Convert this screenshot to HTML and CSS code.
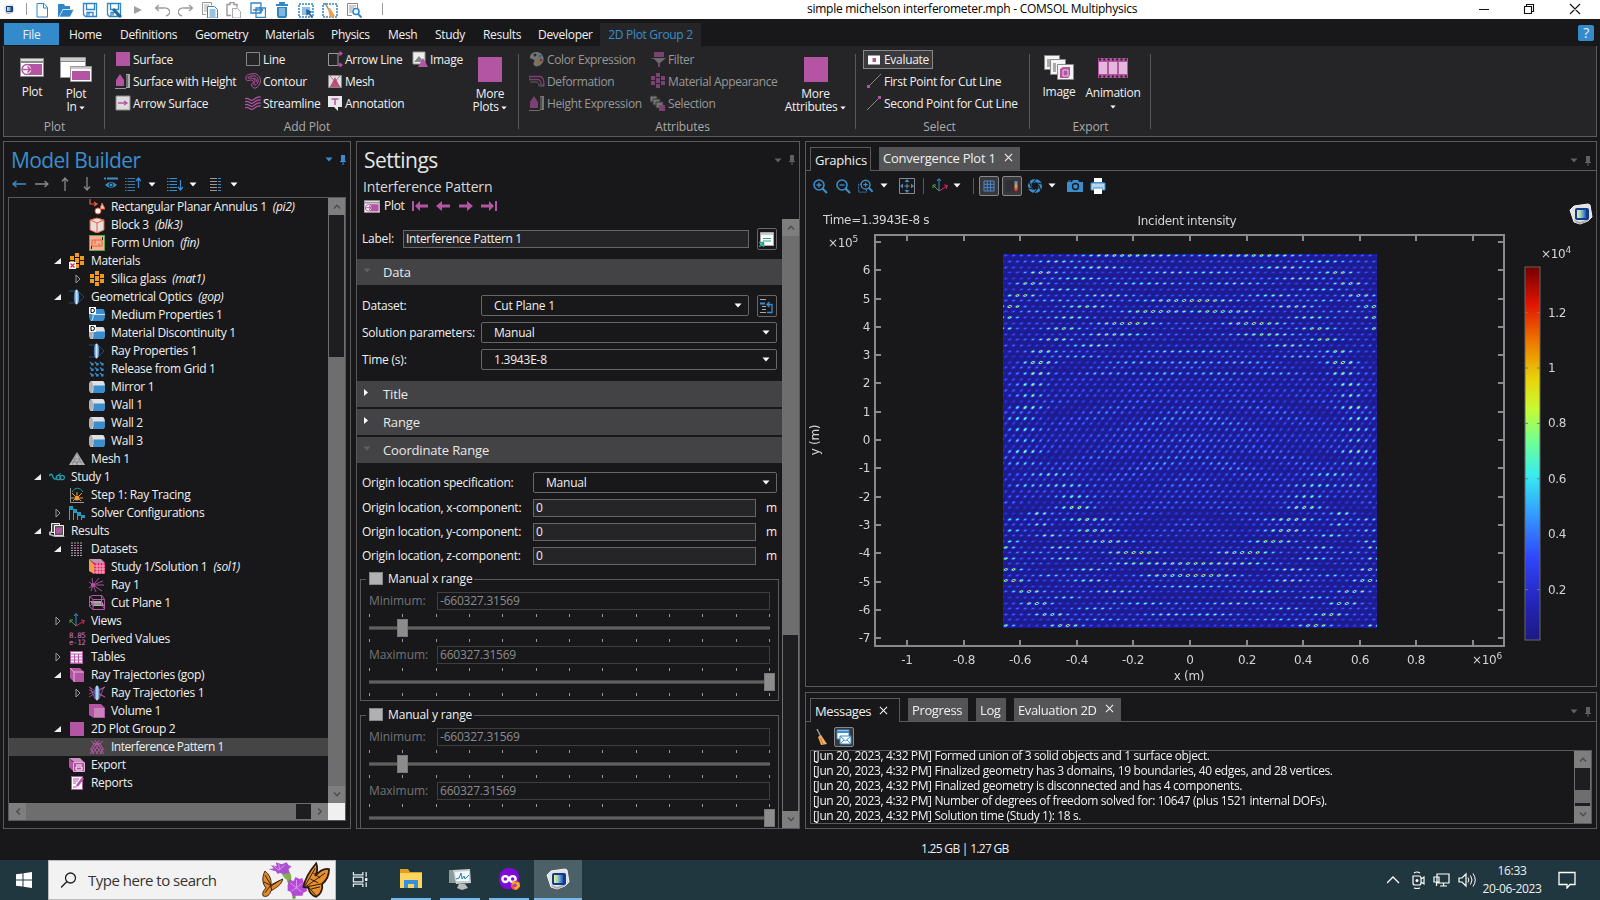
FILE: index.html
```html
<!DOCTYPE html>
<html lang="en">
<head>
<meta charset="utf-8">
<title>simple michelson interferometer.mph - COMSOL Multiphysics</title>
<link rel="stylesheet" href="styles.css">
</head>
<body>
<svg class="sprite" aria-hidden="true">
<defs>
<linearGradient id="lens"><stop offset="0" stop-color="#1d5a96"/><stop offset=".5" stop-color="#cfe6fa"/><stop offset="1" stop-color="#2e7cc0"/></linearGradient>
<linearGradient id="core"><stop offset="0" stop-color="#f0f080"/><stop offset=".4" stop-color="#9cd0c0"/><stop offset="1" stop-color="#1c58c0"/></linearGradient>
<linearGradient id="bar" x1="0" y1="1" x2="0" y2="0"><stop offset="0" stop-color="#e02040"/><stop offset=".45" stop-color="#f0a040"/><stop offset="1" stop-color="#3a8ecd"/></linearGradient>
</defs>
<symbol id="logo" viewBox="0 0 24 22"><path d="m1 7 4-4 14-2 2 1 2 12-4 4-8 3-6-2z" fill="#e2e2e2" stroke="#f4f4f4"/><path d="m5 17 6 2 9-3 2-3-3 5-8 3-5-2z" fill="#aaa"/><rect x="6" y="5" width="14" height="12" rx="2" fill="#123a8c"/><rect x="8" y="7" width="9" height="8" fill="url(#core)"/></symbol>
<symbol id="new" viewBox="0 0 16 16"><path d="M3 1.500h7l3.500 4v9.500H3zM9.500 1.500v4.500h4" fill="none" stroke="#2f86c8"/></symbol>
<symbol id="open" viewBox="0 0 16 16"><path d="M0 15V2h6l1 2h5v3H5L1 15z" fill="#2f86c8"/><path d="M5 7.500h11L12 15H1z" fill="#2f86c8" stroke="#fff" stroke-width=".6"/></symbol>
<symbol id="save" viewBox="0 0 16 16"><path d="M1.500 1.500h13v13h-11l-2-2zM4.500 1.500v6h8v-6M5 14.500v-4h6v4M7 11v2.500" fill="none" stroke="#2f86c8" stroke-width="1.300"/></symbol>
<symbol id="saveas" viewBox="0 0 16 16"><use href="#save"/><path d="m7 7 8 8" stroke="#2468a0" stroke-width="3"/></symbol>
<symbol id="play" viewBox="0 0 16 16"><path d="m4 4 8 4-8 4z" fill="#a0a0a0"/></symbol>
<symbol id="undo" viewBox="0 0 16 16"><path d="M5 3 1.500 6 5 9M2 6h7a5 4 0 0 1 3 8" fill="none" stroke="#9a9a9a" stroke-width="1.300"/></symbol>
<symbol id="copy" viewBox="0 0 16 16"><path d="M4 12.500H.5v-12h9v3" fill="none" stroke="#999"/><path d="M2 3h5M2 5h3M2 7h3M2 9h3" stroke="#aaa"/><path d="M5.500 4.500h7l3 3V16H5.500z" fill="#fff" stroke="#2f86c8"/><path d="M7.500 8h6M7.500 10h6M7.500 12h6M7.500 14h6" stroke="#2f86c8"/></symbol>
<symbol id="paste" viewBox="0 0 16 16"><path d="M5 13.500H1v-11h3v-2h4v2h3v3" fill="none" stroke="#999" stroke-width="1.400"/><path d="M6.500 6.500h5l3 3V16h-8z" fill="#fff" stroke="#aaa"/></symbol>
<symbol id="dup" viewBox="0 0 16 16"><path d="M1 1h10v10H1zM6 6h9.500v9.500H6z" fill="#fff" stroke="#2f86c8" stroke-width="1.300"/><path d="M3 8h9M9 5l3.500 3L9 11" fill="none" stroke="#2f86c8" stroke-width="1.500"/></symbol>
<symbol id="trash" viewBox="0 0 16 16"><path d="M2 3h12M6 3V1h4v2" stroke="#2f86c8" stroke-width="1.800" fill="none"/><path d="M3 5h10v9l-1 2H4l-1-2z" fill="#2f86c8"/><path d="M6 6v8M8 6v8M10 6v8" stroke="#fff" stroke-width=".8"/></symbol>
<symbol id="selbox" viewBox="0 0 16 16"><path d="M1 2h14v13H1z" fill="none" stroke="#2f86c8" stroke-width="1.500" stroke-dasharray="2 1"/><path d="M4 5h8v8H4z" fill="#8fc0e4"/><path d="m8 7 7 3-3 1 3 4-1.500 1-3-4-2 2z" fill="#2468a0"/></symbol>
<symbol id="clear" viewBox="0 0 16 16"><path d="M1 2h14v13H1z" fill="none" stroke="#2f86c8" stroke-width="1.500" stroke-dasharray="2 1"/><path d="m3 1 4 7" stroke="#888" stroke-width="1.500"/><path d="m6 7 2-1 5 8-5 2z" fill="#e8a450"/></symbol>
<symbol id="find" viewBox="0 0 16 16"><path d="M6 13.500H1.500v-12h10V6" fill="none" stroke="#888"/><path d="M3 4h7M3 6h5M3 8h3M3 10h3" stroke="#999"/><circle cx="10" cy="9.500" r="3" fill="#fff" stroke="#2f86c8" stroke-width="1.600"/><path d="m12 12 3.500 3.500" stroke="#2f86c8" stroke-width="2"/></symbol>
<symbol id="plot" viewBox="0 0 24 19"><path d="M0 0h24v19H0z" fill="#8c8c8c"/><path d="M1 1h22v2H1z" fill="#ddd"/><path d="M1 5h22v13H1z" fill="#fff"/><path d="M9 6h13v11H9z" fill="#b455a4"/><circle cx="7" cy="11.500" r="5" fill="#fff" stroke="#b455a4" stroke-width="1.500"/><path d="M3 11.500h7M7.500 8.500l3 3-3 3" fill="none" stroke="#b455a4" stroke-width="1.600"/></symbol>
<symbol id="plotin" viewBox="0 0 32 26"><path d="M.5.500h25v20H.5z" fill="#fff" stroke="#999"/><path d="M1 1h24v3H1z" fill="#ccc"/><path d="M0 4.500h25" stroke="#888"/><path d="M10.500 9.500h21v15h-21z" fill="#fff" stroke="#999"/><path d="M11 10h20v2H11z" fill="#ccc"/><path d="M12 14h18v9H12z" fill="#b455a4"/></symbol>
<symbol id="sq" viewBox="0 0 16 16"><path d="M1 1h14v14H1z" fill="#b455a4"/></symbol>
<symbol id="height" viewBox="0 0 16 16"><path d="M1 13V7l4-6 4 6v6z" fill="#b455a4"/><path d="M0 15.500h11" stroke="#999"/><path d="M11 1h4v14h-4z" fill="#aaa"/><path d="M11 3h2M11 5h2M11 7h2M11 9h2M11 11h2M11 13h2" stroke="#333"/></symbol>
<symbol id="arrows" viewBox="0 0 16 16"><path d="M1 1h14v14H1z" fill="#dcdcdc" stroke="#888"/><path d="M3 8h9M9 6l3 2-3 2" fill="none" stroke="#b455a4" stroke-width="1.300"/></symbol>
<symbol id="line" viewBox="0 0 16 16"><path d="M1.500 1.500h13v13h-13z" fill="none" stroke="#888"/></symbol>
<symbol id="contour" viewBox="0 0 16 16"><g fill="none" stroke="#b455a4"><path d="M7 1C12-1 17 5 15 10s-6 7-8 3 3-2 1-5-6 2-7-2 3-5 6-5z"/><path d="M8 3c3-1 6 3 5 6s-4 4-4 2 2-3 0-5-5 0-6-1 2-2 5-2z"/><path d="M9 5c2 0 3 3 2 4"/></g></symbol>
<symbol id="stream" viewBox="0 0 16 16"><path d="M0 4c3-3 5 3 8 1s4-4 8-3M0 7c3-3 5 3 8 1s4-4 8-3M0 10c3-3 5 3 8 1s4-4 8-3M0 13c3-3 5 3 8 1s4-4 8-3" fill="none" stroke="#b455a4" stroke-width="1.200"/></symbol>
<symbol id="aline" viewBox="0 0 16 16"><path d="M11 2.500H1.500v12H11" fill="none" stroke="#999"/><path d="M11 3v11" stroke="#999"/><path d="M11 2.500h4M12.500.5l2.500 2-2.500 2M11 14h4M12.500 12l2.500 2-2.500 2" fill="none" stroke="#b455a4" stroke-width="1.300"/></symbol>
<symbol id="mesh" viewBox="0 0 16 16"><path d="M1.500 2.500h13v12h-13z" fill="#ddd" stroke="#888"/><path d="m8 4 5 10H3z" fill="#c8507c"/><path d="M3 3l10 11M13 3 3 14" stroke="#a04070" stroke-width=".7"/></symbol>
<symbol id="annot" viewBox="0 0 16 16"><path d="M1 1h14v11h-4v4l-4-4H1z" fill="#e8e8e8"/><path d="M4.500 4h7M8 4v6" stroke="#b455a4" stroke-width="1.500"/></symbol>
<symbol id="img" viewBox="0 0 16 16"><path d="M1 1h12v12H1z" fill="#eee" stroke="#999"/><path d="m2 11 5-6 5 6z" fill="#888"/><path d="m11 7 5 9H6z" fill="#b455a4"/></symbol>
<symbol id="color" viewBox="0 0 16 16"><path d="M8 1c5 0 8 6 6 10s-7 6-9 3 2-3 0-5-4 0-4-3 3-5 7-5z" fill="#aaa"/><circle cx="6" cy="4" r="1.500" fill="#333"/><circle cx="11" cy="5" r="1.500" fill="#3a8ecd"/><circle cx="12" cy="9" r="1.500" fill="#d33"/><circle cx="9" cy="12" r="1.500" fill="#e90"/></symbol>
<symbol id="deform" viewBox="0 0 16 16"><path d="M0 3.500h11c3 0 4 3 4 9l-3-1c0-4-1-5-4-5H0z" fill="none" stroke="#b455a4" stroke-width="1.300"/><path d="M1 9h6c2 0 3 1 3 4h5" fill="none" stroke="#888"/></symbol>
<symbol id="filter" viewBox="0 0 16 16"><path d="M4 1h10v5H4z" fill="#b455a4"/><path d="M0 7h16l-6 5v4H8v-4L4 8z" fill="#999"/><path d="M8 12h2v4H8z" fill="#b455a4"/></symbol>
<symbol id="mat" viewBox="0 0 16 16"><path d="M6 0h4v4H6zM1 3h4v4H1zM6 5h4v5H6zM11 3h4v4h-4zM1 8h4v4H1zM11 8h4v4h-4zM6 11h4v4H6z"/></symbol>
<symbol id="selec" viewBox="0 0 16 16"><path d="M0 1h7v6H0z" fill="#aaa" stroke="#444"/><path d="M3 4h7v6H3z" fill="#aaa" stroke="#444"/><path d="M6 7h7v6H6z" fill="#aaa" stroke="#444"/><path d="M9 10h6v6H9z" fill="#b455a4"/></symbol>
<symbol id="eval" viewBox="0 0 16 16"><path d="M2 3.500h12v9H2z" fill="#fff"/><path d="M6.500 6h3.500v4H6.500z" fill="#b455a4"/></symbol>
<symbol id="pt1" viewBox="0 0 16 16"><path d="M4 12 15 1" stroke="#888"/><path d="M1 12h3v3H1z" fill="#b455a4"/></symbol>
<symbol id="pt2" viewBox="0 0 16 16"><path d="M1 15 12 4" stroke="#888"/><path d="M12 1h3v3h-3z" fill="#b455a4"/></symbol>
<symbol id="imgs" viewBox="0 0 30 25"><g fill="#f4f4f4" stroke="#8a8a8a"><path d="M.5.500h15v14H.5z"/><path d="M6.500 4.500h15v15h-15z"/><path d="M13.500 9.500h16v15h-16z"/></g><path d="M3 4h3v8H3zM9 8h3v9H9z" fill="#aaa"/><path d="m16 14 3-2h7v8l-2 3h-8z" fill="#b455a4"/><path d="M19 15h5v6h-5z" fill="none" stroke="#fff" stroke-width=".7"/></symbol>
<symbol id="film" viewBox="0 0 30 20"><path d="M0 0h30v20H0z" fill="#b455a4"/><path d="M1 4h8v12H1zM11 4h8v12h-8zM21 4h8v12h-8z" fill="#e4b8dc"/><path d="M1 1.500h28M1 18.500h28" stroke="#222" stroke-width="2" stroke-dasharray="2 2.300"/></symbol>
<symbol id="annulus" viewBox="0 0 16 16"><path d="M1 0v5h6M5 3l3 2-3 2" fill="none" stroke="#e8603c" stroke-width="1.200"/><path d="m13 4 3 6h-5z" fill="#f0d8d0" stroke="#e8603c"/><circle cx="9" cy="12" r="3" fill="#fff" stroke="#e8603c"/></symbol>
<symbol id="block" viewBox="0 0 16 16"><path d="m1 3 7-2 7 2v10l-7 3-7-3z" fill="#e6e0de" stroke="#e8603c"/><path d="m1 3 7 3 7-3M8 6v9" fill="none" stroke="#e8603c"/></symbol>
<symbol id="union" viewBox="0 0 16 16"><path d="M.5.500h15v15H.5z" fill="#f4b094" stroke="#60a840"/><path d="M3 5h10v6H3zM6 5v4M10 8v3" fill="none" stroke="#e8603c"/><path d="M13 2h1v3h-1zM2 11h1v3H2z" fill="#222"/></symbol>
<symbol id="optic" viewBox="0 0 16 16"><path d="M0 2h6M0 14h6M9 2l6 6-6 6" fill="none" stroke="#244a70"/><ellipse cx="7.500" cy="8" rx="2.800" ry="7.500" fill="url(#lens)"/></symbol>
<symbol id="wall" viewBox="0 0 16 16"><path d="M2 2h12q2 1 2 6t-2 6H2q-2-1-2-6t2-6z" fill="#e0e0e0"/><path d="M4.500 6.500H16V10q0 4-2 4H3.500q1-2 1-4z" fill="#3a8ecd"/><path d="M2 2q2 1 2 6t-2 6q-2-1-2-6t2-6z" fill="#b0b0b0"/></symbol>
<symbol id="medium" viewBox="0 0 16 16"><path d="M2 2h12q2 1 2 6t-2 6H2q-2-1-2-6t2-6z" fill="#3a8ecd"/><path d="M4 7.500h12M2.500 14c2-3 2-5 1-8" stroke="#cce4f6" fill="none"/><use href="#dbadge"/></symbol>
<symbol id="dbadge" viewBox="0 0 16 16"><path d="M0 0h7v7H0z" fill="#fff"/><path d="M2 1.500h1.500q2 0 2 2t-2 2H2z" fill="none" stroke="#000"/></symbol>
<symbol id="matdis" viewBox="0 0 16 16"><use href="#wall"/><use href="#dbadge"/></symbol>
<symbol id="grid" viewBox="0 0 16 16"><path id="ga" d="m1 1 3 3M4 2v2H2M6 1l3 3M9 2v2H7M11 1l3 3M14 2v2h-2" fill="none" stroke="#3a8ecd" stroke-width="1.200"/><use href="#ga" y="5.500"/><use href="#ga" y="11"/></symbol>
<symbol id="tri" viewBox="0 0 16 16"><path d="m8 1 8 13H0z" fill="#b8b8b8"/><path d="M4 8h8M2 11h12M8 2l5 12M8 2 3 14M5 8l4 6M11 8l-4 6" stroke="#777" stroke-width=".6"/></symbol>
<symbol id="study" viewBox="0 0 16 16"><path d="M0 7c2-3 3-2 4 1s3 3 4 0" fill="none" stroke="#229aac" stroke-width="1.400"/><circle cx="9.500" cy="8.500" r="2.200" fill="none" stroke="#229aac" stroke-width="1.300"/><circle cx="13.200" cy="8.500" r="2.200" fill="none" stroke="#229aac" stroke-width="1.300"/><path d="m9 6 3-1.500" stroke="#229aac"/></symbol>
<symbol id="step" viewBox="0 0 16 16"><path d="M1.500 1v14.500H15" fill="none" stroke="#999"/><path d="M3 5c3-5 8-5 11 0" fill="none" stroke="#229aac"/><circle cx="8" cy="11" r="2.500" fill="#f0a030"/><path d="M8 5v3M3 6l3 3M13 6l-3 3M2 11h3M14 11h-3M4 14l2-2M12 14l-2-2" stroke="#f0a030"/></symbol>
<symbol id="solver" viewBox="0 0 16 16"><path d="M.5 1v14M4.500 5v10M8.500 8v7M12.500 11v4" stroke="#888"/><path d="M0 1h4v4H0zM4 4h4v4H4zM8 7h4v4H8zM12 10h4v3h-4z" fill="#229ac0"/></symbol>
<symbol id="results" viewBox="0 0 16 16"><path d="M2.500.5h8v9h-8z" fill="#555" stroke="#eee"/><path d="M5.500 2.500h9v10h-9z" fill="#555" stroke="#fff"/><path d="M7 4.500h6v6H7z" fill="#b455a4"/><path d="m0 9 2-1v3l4 1.500h8l2 1.500H6l-6-2z" fill="#bbb"/></symbol>
<symbol id="datasets" viewBox="0 0 16 16"><path d="M2 2h12M2 4.500h12M2 7h12M2 9.500h12M2 12h12M2 14.500h12" stroke="#aaa" stroke-dasharray="2 1"/><path d="M5 4.500h5M5 7h8M5 12h5" stroke="#b455a4" stroke-dasharray="2 1"/></symbol>
<symbol id="sol" viewBox="0 0 16 16"><path d="m0 0 5 5v10l-5-3z" fill="#f0a040"/><path d="M0 0h12l4 4H5z" fill="#c890b8"/><path d="M5 4h11v11H5z" fill="#e02858"/><path d="M8 4v11M11 4v11M14 4v11M5 7h11M5 10h11M5 13h11" stroke="#fbd" stroke-width=".9"/></symbol>
<symbol id="ray" viewBox="0 0 16 16"><path d="M4 8h11M4 8l10-4M4 8l9 6M4 8l6-7M4 8l3 7M4 8 3 1M4 8l-2 6M4 8 0 5M4 8l-4 3" stroke="#b455a4" stroke-width=".9"/><circle cx="4" cy="8" r="2" fill="#b455a4"/></symbol>
<symbol id="cut" viewBox="0 0 16 16"><path d="M1 6h12l2 5H4z" fill="#aaa"/><path d="M.5 1.500 4 .5h9l2.500 4v10H4l-3.500-3zM.500 1.500 4 4.500h11.500M4 4.500v10M.5 11.500 3 9h9l3.500 5M12.500.5V9" fill="none" stroke="#b455a4"/></symbol>
<symbol id="axes" viewBox="0 0 16 16"><path d="M7 13V1M5 3l2-2.500L9 3" fill="none" stroke="#3a8ecd"/><path d="M7 13 1 7M1 10V7h3" fill="none" stroke="#40a848"/><path d="m7 13 8-5M12 7l3.500.500L14 11" fill="none" stroke="#d8285c"/></symbol>
<symbol id="table" viewBox="0 0 16 16"><path d="M1 2h13v13H1z" fill="#b455a4"/><path d="M2 5.500h3v2H2zM6 5.500h3v2H6zM10 5.500h3v2h-3zM2 8.500h3v2H2zM6 8.500h3v2H6zM10 8.500h3v2h-3zM2 11.500h3v2H2zM6 11.500h3v2H6zM10 11.500h3v2h-3zM2 3h11v1.500H2z" fill="#fff"/></symbol>
<symbol id="cube" viewBox="0 0 16 16"><path d="m1 1 10 0 4 4v10H5l-4-4z" fill="#b455a4"/><path d="m1 1 4 4h10M5 5v10" fill="none" stroke="#e8c0e0" stroke-width=".9"/></symbol>
<symbol id="vol" viewBox="0 0 16 16"><path d="M0 1h12l4 4v10H5l-5-3z" fill="#b455a4"/><path d="M5 5h10v9H5z" fill="#c884ba"/></symbol>
<symbol id="traj" viewBox="0 0 16 16"><path d="m0 2 16 10M0 12 16 2M0 5l16 7M0 9l16-7M1 2l5 12M15 2l-5 12" stroke="#b455a4" stroke-width=".8"/><ellipse cx="8" cy="8" rx="2.800" ry="7.500" fill="url(#lens)"/></symbol>
<symbol id="interf" viewBox="0 0 16 16"><path d="M2 2l5 4M14 2 9 6M8 3 1 15M8 3l7 12M5 5l-4 6M11 5l4 6M6 6l7 9M10 6l-7 9M4 8l5 7M12 8l-5 7M2 10l3 5M14 10l-3 5M4 4l5 2M12 4 7 6M6 1l2 4M10 1 8 5" stroke="#b455a4"/></symbol>
<symbol id="export" viewBox="0 0 16 16"><path d="M0 1h11l4 4H5z" fill="#d090c4"/><path d="m0 1 4 4v9l-4-4z" fill="#b455a4"/><path d="M4.500 5.500h11v9h-11z" fill="#b455a4" stroke="#e0b0d8"/><path d="M7 8h6M7 10h6v3H7z" fill="none" stroke="#fff"/></symbol>
<symbol id="report" viewBox="0 0 16 16"><path d="M2.500 1.500h11v13h-11z" fill="#fff" stroke="#b455a4"/><path d="M4 4h6M4 6h5M4 8h3M4 12h4" stroke="#b455a4"/><path d="m8 11 6-8" stroke="#b455a4" stroke-width="2.500"/></symbol>
<symbol id="exp" viewBox="0 0 8 8"><path d="M7 1v6H0z" fill="#eee"/></symbol>
<symbol id="col" viewBox="0 0 8 10"><path d="M2 1v8l4-4z" fill="none" stroke="#999"/></symbol>
<symbol id="dn" viewBox="0 0 8 5"><path d="M.5.500h7L4 4.500z"/></symbol>
<symbol id="pin" viewBox="0 0 8 10"><path d="M2 0h4v6h1v1H4.500v3h-1V7H1V6h1z"/></symbol>
<symbol id="left" viewBox="0 0 16 16"><path d="M15 8H2M5.500 5 2 8l3.500 3" fill="none" stroke="currentColor" stroke-width="1.300"/></symbol>
<symbol id="eye" viewBox="0 0 16 16"><path d="M1 2.500h14" stroke="#3a8ecd" stroke-width="2" stroke-dasharray="2 1 12"/><path d="M2 9q6-6 12 0-6 6-12 0z" fill="#3a8ecd"/><circle cx="8" cy="9" r="2" fill="none" stroke="#18181a"/></symbol>
<symbol id="lup" viewBox="0 0 16 16"><path d="M0 2.500h10M0 5.500h10M0 8.500h10M0 11.500h10M0 14.500h10" stroke="#3878a8" stroke-dasharray="1.500 1 8"/><path d="M13.500 12V2M11 5l2.500-3L16 5" fill="none" stroke="#3a8ecd" stroke-width="1.200"/></symbol>
<symbol id="ldown" viewBox="0 0 16 16"><path d="M0 2.500h10M0 5.500h10M0 8.500h10M0 11.500h10M0 14.500h10" stroke="#3a8ecd" stroke-dasharray="1.500 1 8"/><path d="M13.500 4v10M11 11l2.500 3 2.500-3" fill="none" stroke="#3a8ecd" stroke-width="1.200"/></symbol>
<symbol id="lcols" viewBox="0 0 16 16"><path d="M2 2.500h7M2 5.500h7M2 8.500h7M2 11.500h7M2 14.500h7" stroke="#999"/><path d="M10 2.500h3M10 5.500h3M10 8.500h3M10 11.500h3M10 14.500h3" stroke="#3a8ecd"/></symbol>
<symbol id="prev" viewBox="0 0 16 12"><path d="M15 4.500v3H7V11L1 6l6-5v3.500z" fill="#b455a4"/></symbol>
<symbol id="first" viewBox="0 0 16 12"><path d="M0 1h2v10H0zM16 4.500v3H8V11L3 6l5-5v3.500z" fill="#b455a4"/></symbol>
<symbol id="rename" viewBox="0 0 16 16"><path d="M1.500 1.500h13v13h-13z" fill="#fff" stroke="#aaa"/><path d="M2 2h12v2H2z" fill="#ccc"/><path d="M4 7.500h8M4 10h8" stroke="#20a890"/><path d="M0 16l4-4M0 11.500h4.500V16" fill="none" stroke="#20a890" stroke-width="1.500"/></symbol>
<symbol id="goto" viewBox="0 0 16 16"><path d="M1 1.500h6M3 8.500h4M3 11.500h4M1 14.500h6" stroke="#aaa"/><path d="M1 5.500h5" stroke="#3a8ecd" stroke-width="2"/><path d="M8 6.500h5v8H8M10.500 4 8 6.500 10.500 9" fill="none" stroke="#3a8ecd" stroke-width="1.300"/></symbol>
<symbol id="zoomin" viewBox="0 0 16 16"><circle cx="7" cy="7" r="5" fill="none" stroke="#3a8ecd" stroke-width="1.600"/><path d="m10.500 10.500 4.500 4.500" stroke="#3a8ecd" stroke-width="2.200"/><path d="M4.500 7h5M7 4.500v5" stroke="#3a8ecd" stroke-width="1.300"/></symbol>
<symbol id="zoomout" viewBox="0 0 16 16"><circle cx="7" cy="7" r="5" fill="none" stroke="#3a8ecd" stroke-width="1.600"/><path d="m10.500 10.500 4.500 4.500" stroke="#3a8ecd" stroke-width="2.200"/><path d="M4.500 7h5" stroke="#3a8ecd" stroke-width="1.300"/></symbol>
<symbol id="zoombox" viewBox="0 0 17 16"><path d="M4 6H.7v8.500H9v-3" fill="none" stroke="#3a8ecd" stroke-dasharray="2 1"/><use href="#zoomin" x="1" width="16" height="15"/></symbol>
<symbol id="extents" viewBox="0 0 16 16"><path d="M.5.500h15v15H.5z" fill="none" stroke="#888"/><path d="M8 5.500v5M5.500 8h5" stroke="#888"/><path d="m8 1 2.500 3h-5zM8 15l2.500-3h-5zM1 8l3-2.500v5zM15 8l-3-2.500v5z" fill="#3a8ecd"/></symbol>
<symbol id="gridb" viewBox="0 0 16 16"><path d="M3 3h10v10H3zM3 6.300h10M3 9.600h10M6.300 3v10M9.600 3v10" fill="none" stroke="#4a88cc"/></symbol>
<symbol id="legendb" viewBox="0 0 16 16"><path d="M1.500 2.500h13v11h-13z" fill="#303034"/><path d="M10.500 3h3v10h-3z" fill="url(#bar)"/></symbol>
<symbol id="apert" viewBox="0 0 16 16"><circle cx="8" cy="8" r="5.200" fill="none" stroke="#3a8ecd" stroke-width="3.800"/><path d="M9 1 4.500 6.500M15 6l-7-1.500M14 13l-2.500-6.500M7 15l4.500-5.500M1 10l7 1.500M2 3l2.500 6.500" stroke="#18181a" stroke-width="1.100"/></symbol>
<symbol id="camera" viewBox="0 0 16 16"><path d="M0 4h5l1-2h5l1 2h4v10H0z" fill="#3a8ecd"/><circle cx="8.500" cy="8.500" r="3" fill="none" stroke="#18181a" stroke-width="1.400"/><path d="M1 3h3" stroke="#3a8ecd"/></symbol>
<symbol id="print" viewBox="0 0 16 16"><path d="M1 5h14v7H1z" fill="#b8d4ee" stroke="#3a8ecd"/><path d="M4 0h8v4H4zM4 10h8v6H4z" fill="#fff"/><path d="M3 10h10M3 4.500h10" stroke="#3a8ecd"/></symbol>
<symbol id="broom" viewBox="0 0 16 16"><path d="m4 0 4 8" stroke="#999" stroke-width="1.500"/><path d="m5 8 3-2 6 9-6 1z" fill="#f0b060"/><path d="m7 9 3 6" stroke="#c07020"/></symbol>
<symbol id="mail" viewBox="0 0 16 16"><path d="M1 1h12v9H1z" fill="#fff" stroke="#3a8ecd"/><path d="M1 2h12v2H1z" fill="#3a8ecd"/><path d="M4 7h11v8H4z" fill="#fff" stroke="#3a8ecd"/><path d="m4 7 5.500 5L15 7M4 15l4-4M15 15l-4-4" fill="none" stroke="#3a8ecd"/></symbol>
<symbol id="chu" viewBox="0 0 8 5"><path d="M1 4.500 4 1.300l3 3.200" fill="none" stroke="#4c4c4c" stroke-width="1.400"/></symbol>
<symbol id="x" viewBox="0 0 10 10"><path d="m1 1 8 8M9 1 1 9" stroke="currentColor" stroke-width="1.200"/></symbol>
</svg>

<header class="titlebar">
  <svg class="tb-logo"><use href="#logo"/></svg><i class="tb-sep"></i>
  <nav class="quick">
    <svg><use href="#new"/></svg><svg><use href="#open"/></svg><svg><use href="#save"/></svg><svg><use href="#saveas"/></svg><svg><use href="#play"/></svg><svg><use href="#undo"/></svg><svg class="flip"><use href="#undo"/></svg><svg><use href="#copy"/></svg><svg><use href="#paste"/></svg><svg><use href="#dup"/></svg><svg><use href="#trash"/></svg><svg><use href="#selbox"/></svg><svg><use href="#clear"/></svg><svg><use href="#find"/></svg>
  </nav><i class="tb-sep second"></i>
  <span class="doc-title">simple michelson interferometer.mph - COMSOL Multiphysics</span>
  <svg class="win" viewBox="0 0 110 16"><path d="M0 8.500h10M45.500 5.500h7v7h-7zM47.500 5.500v-2h7v7h-2M91 3l10 10M101 3 91 13" fill="none" stroke="#111" stroke-width="1.100"/></svg>
</header>

<nav class="menubar"><span class="file">File</span><span>Home</span><span>Definitions</span><span>Geometry</span><span>Materials</span><span>Physics</span><span>Mesh</span><span>Study</span><span>Results</span><span>Developer</span><span class="current">2D Plot Group 2</span><b class="help">?</b></nav>

<section class="ribbon">
  <div class="group g1"><div class="tools">
    <div class="big"><svg class="i-plot"><use href="#plot"/></svg><span>Plot</span></div>
    <div class="big"><svg class="i-plotin"><use href="#plotin"/></svg><span>Plot</span><span>In <svg class="dn"><use href="#dn"/></svg></span></div>
  </div><p>Plot</p></div>
  <div class="group g2"><div class="tools">
    <ul><li><svg><use href="#sq"/></svg>Surface</li><li><svg><use href="#height"/></svg>Surface with Height</li><li><svg><use href="#arrows"/></svg>Arrow Surface</li></ul>
    <ul><li><svg><use href="#line"/></svg>Line</li><li><svg><use href="#contour"/></svg>Contour</li><li><svg><use href="#stream"/></svg>Streamline</li></ul>
    <ul><li><svg><use href="#aline"/></svg>Arrow Line</li><li><svg><use href="#mesh"/></svg>Mesh</li><li><svg><use href="#annot"/></svg>Annotation</li></ul>
    <ul><li><svg><use href="#img"/></svg>Image</li></ul>
    <div class="big"><i class="swatch"></i><span>More</span><span>Plots <svg class="dn"><use href="#dn"/></svg></span></div>
  </div><p>Add Plot</p></div>
  <div class="group g3"><div class="tools">
    <ul class="off"><li><svg><use href="#color"/></svg>Color Expression</li><li><svg><use href="#deform"/></svg>Deformation</li><li><svg><use href="#height"/></svg>Height Expression</li></ul>
    <ul class="off"><li><svg><use href="#filter"/></svg>Filter</li><li><svg class="mat-pink"><use href="#mat"/></svg>Material Appearance</li><li><svg><use href="#selec"/></svg>Selection</li></ul>
    <div class="big"><i class="swatch"></i><span>More</span><span>Attributes <svg class="dn"><use href="#dn"/></svg></span></div>
  </div><p>Attributes</p></div>
  <div class="group g4"><div class="tools">
    <ul><li class="pressed"><svg><use href="#eval"/></svg>Evaluate</li><li><svg><use href="#pt1"/></svg>First Point for Cut Line</li><li><svg><use href="#pt2"/></svg>Second Point for Cut Line</li></ul>
  </div><p>Select</p></div>
  <div class="group g5"><div class="tools">
    <div class="big"><svg class="i-imgs"><use href="#imgs"/></svg><span>Image</span></div>
    <div class="big"><svg class="i-film"><use href="#film"/></svg><span>Animation</span><span><svg class="dn"><use href="#dn"/></svg></span></div>
  </div><p>Export</p></div>
</section>

<main>
  <section class="panel builder">
    <div class="head"><h1>Model Builder</h1><svg class="dn"><use href="#dn"/></svg><svg class="pin"><use href="#pin"/></svg></div>
    <div class="bar">
      <svg class="blue"><use href="#left"/></svg><svg class="flip"><use href="#left"/></svg><svg class="up"><use href="#left"/></svg><svg class="down"><use href="#left"/></svg><svg><use href="#eye"/></svg><svg><use href="#lup"/></svg><svg class="dn"><use href="#dn"/></svg><svg><use href="#ldown"/></svg><svg class="dn"><use href="#dn"/></svg><svg><use href="#lcols"/></svg><svg class="dn"><use href="#dn"/></svg>
    </div>
    <div class="tree-box">
      <ul class="tree">
        <li class="l3"><s></s><svg><use href="#annulus"/></svg>Rectangular Planar Annulus 1 <em>(pi2)</em></li>
        <li class="l3"><s></s><svg><use href="#block"/></svg>Block 3 <em>(blk3)</em></li>
        <li class="l3"><s></s><svg><use href="#union"/></svg>Form Union <em>(fin)</em></li>
        <li class="l2"><svg class="t"><use href="#exp"/></svg><svg class="mat-o bad" viewBox="0 0 16 16"><use href="#mat"/><path d="M0 9h7v7H0z" fill="#fff"/><path d="m1.500 10.500 4 4m0-4-4 4" stroke="#d02860" stroke-width="1.300"/></svg>Materials</li>
        <li class="l3"><svg class="t c"><use href="#col"/></svg><svg class="mat-o"><use href="#mat"/></svg>Silica glass <em>(mat1)</em></li>
        <li class="l2"><svg class="t"><use href="#exp"/></svg><svg><use href="#optic"/></svg>Geometrical Optics <em>(gop)</em></li>
        <li class="l3"><s></s><svg><use href="#medium"/></svg>Medium Properties 1</li>
        <li class="l3"><s></s><svg><use href="#matdis"/></svg>Material Discontinuity 1</li>
        <li class="l3"><s></s><svg><use href="#optic"/></svg>Ray Properties 1</li>
        <li class="l3"><s></s><svg><use href="#grid"/></svg>Release from Grid 1</li>
        <li class="l3"><s></s><svg><use href="#wall"/></svg>Mirror 1</li>
        <li class="l3"><s></s><svg><use href="#wall"/></svg>Wall 1</li>
        <li class="l3"><s></s><svg><use href="#wall"/></svg>Wall 2</li>
        <li class="l3"><s></s><svg><use href="#wall"/></svg>Wall 3</li>
        <li class="l2"><s></s><svg><use href="#tri"/></svg>Mesh 1</li>
        <li class="l1"><svg class="t"><use href="#exp"/></svg><svg><use href="#study"/></svg>Study 1</li>
        <li class="l2"><s></s><svg><use href="#step"/></svg>Step 1: Ray Tracing</li>
        <li class="l2"><svg class="t c"><use href="#col"/></svg><svg><use href="#solver"/></svg>Solver Configurations</li>
        <li class="l1"><svg class="t"><use href="#exp"/></svg><svg><use href="#results"/></svg>Results</li>
        <li class="l2"><svg class="t"><use href="#exp"/></svg><svg><use href="#datasets"/></svg>Datasets</li>
        <li class="l3"><s></s><svg><use href="#sol"/></svg>Study 1/Solution 1 <em>(sol1)</em></li>
        <li class="l3"><s></s><svg><use href="#ray"/></svg>Ray 1</li>
        <li class="l3"><s></s><svg><use href="#cut"/></svg>Cut Plane 1</li>
        <li class="l2"><svg class="t c"><use href="#col"/></svg><svg><use href="#axes"/></svg>Views</li>
        <li class="l2"><s></s><b class="digits">8.85<br>e-12</b>Derived Values</li>
        <li class="l2"><svg class="t c"><use href="#col"/></svg><svg><use href="#table"/></svg>Tables</li>
        <li class="l2"><svg class="t"><use href="#exp"/></svg><svg><use href="#cube"/></svg>Ray Trajectories (gop)</li>
        <li class="l3"><svg class="t c"><use href="#col"/></svg><svg><use href="#traj"/></svg>Ray Trajectories 1</li>
        <li class="l3"><s></s><svg><use href="#vol"/></svg>Volume 1</li>
        <li class="l2"><svg class="t"><use href="#exp"/></svg><svg><use href="#sq"/></svg>2D Plot Group 2</li>
        <li class="l3 sel"><s></s><svg><use href="#interf"/></svg>Interference Pattern 1</li>
        <li class="l2"><s></s><svg><use href="#export"/></svg>Export</li>
        <li class="l2"><s></s><svg><use href="#report"/></svg>Reports</li>
      </ul>
      <div class="vs tree-vs"><b><svg><use href="#chu"/></svg></b><i></i><u></u><b class="d"><svg><use href="#chu"/></svg></b></div>
      <div class="hs"><b class="l"><svg><use href="#chu"/></svg></b><u></u><i></i><b class="r"><svg><use href="#chu"/></svg></b></div>
      <div class="corner"></div>
    </div>
  </section>

  <section class="panel settings">
    <div class="head dim"><h1>Settings</h1><svg class="dn"><use href="#dn"/></svg><svg class="pin"><use href="#pin"/></svg></div>
    <h2>Interference Pattern</h2>
    <div class="sbar"><svg class="p"><use href="#plot"/></svg><span>Plot</span><svg><use href="#first"/></svg><svg><use href="#prev"/></svg><svg class="flip"><use href="#prev"/></svg><svg class="flip"><use href="#first"/></svg></div>
    <div class="scroll">
      <div class="form">
        <div class="row label-row"><label>Label:</label><div class="input">Interference Pattern 1</div><div class="btn"><svg><use href="#rename"/></svg></div></div>
        <h3><svg class="dn dk"><use href="#dn"/></svg>Data</h3>
        <div class="data">
          <div class="row"><label>Dataset:</label><div class="select">Cut Plane 1<svg class="dn"><use href="#dn"/></svg></div><div class="btn"><svg><use href="#goto"/></svg></div></div>
          <div class="row"><label>Solution parameters:</label><div class="select">Manual<svg class="dn"><use href="#dn"/></svg></div></div>
          <div class="row"><label>Time (s):</label><div class="select">1.3943E-8<svg class="dn"><use href="#dn"/></svg></div></div>
        </div>
        <h3><svg class="dn rt"><use href="#dn"/></svg>Title</h3>
        <h3><svg class="dn rt"><use href="#dn"/></svg>Range</h3>
        <h3><svg class="dn dk"><use href="#dn"/></svg>Coordinate Range</h3>
        <div class="coord">
          <div class="row"><label>Origin location specification:</label><div class="select">Manual<svg class="dn"><use href="#dn"/></svg></div></div>
          <div class="row in"><label>Origin location, x-component:</label><div class="input">0</div><span>m</span></div>
          <div class="row in"><label>Origin location, y-component:</label><div class="input">0</div><span>m</span></div>
          <div class="row in"><label>Origin location, z-component:</label><div class="input">0</div><span>m</span></div>
        </div>
        <div class="fs"><div class="lg"><i></i>Manual x range</div>
          <div class="mm"><label>Minimum:</label><div class="input">-660327.31569</div></div>
          <div class="slider low"><i></i></div>
          <div class="mm"><label>Maximum:</label><div class="input">660327.31569</div></div>
          <div class="slider high"><i></i></div>
        </div>
        <div class="fs"><div class="lg"><i></i>Manual y range</div>
          <div class="mm"><label>Minimum:</label><div class="input">-660327.31569</div></div>
          <div class="slider low"><i></i></div>
          <div class="mm"><label>Maximum:</label><div class="input">660327.31569</div></div>
          <div class="slider high"><i></i></div>
        </div>
      </div>
      <div class="vs set-vs"><b><svg><use href="#chu"/></svg></b><u></u><i></i><b class="d"><svg><use href="#chu"/></svg></b></div>
    </div>
  </section>

  <div class="right">
    <section class="panel graphics">
      <div class="tabs"><span class="open">Graphics</span><span class="conv">Convergence Plot 1<svg><use href="#x"/></svg></span><svg class="dn"><use href="#dn"/></svg><svg class="pin"><use href="#pin"/></svg></div>
      <div class="gbar"><svg><use href="#zoomin"/></svg><svg><use href="#zoomout"/></svg><svg><use href="#zoombox"/></svg><svg class="dn"><use href="#dn"/></svg><svg><use href="#extents"/></svg><i></i><svg><use href="#axes"/></svg><svg class="dn"><use href="#dn"/></svg><i></i><b><svg><use href="#gridb"/></svg></b><b><svg><use href="#legendb"/></svg></b><svg><use href="#apert"/></svg><svg class="dn"><use href="#dn"/></svg><svg><use href="#camera"/></svg><svg><use href="#print"/></svg></div>
      <div class="plot">
        <canvas id="field" width="374" height="374"></canvas>
        <svg id="chart" viewBox="806 200 790 486"></svg>
      </div>
    </section>
    <section class="panel messages">
      <div class="tabs"><span class="open">Messages<svg><use href="#x"/></svg></span><span class="pr">Progress</span><span class="lo">Log</span><span class="ev">Evaluation 2D<svg><use href="#x"/></svg></span><svg class="dn"><use href="#dn"/></svg><svg class="pin"><use href="#pin"/></svg></div>
      <div class="mbar"><svg><use href="#broom"/></svg><b><svg><use href="#mail"/></svg></b></div>
      <div class="log"><div class="lines"><p>[Jun 20, 2023, 4:32 PM] Formed union of 3 solid objects and 1 surface object.</p><p>[Jun 20, 2023, 4:32 PM] Finalized geometry has 3 domains, 19 boundaries, 40 edges, and 28 vertices.</p><p>[Jun 20, 2023, 4:32 PM] Finalized geometry is disconnected and has 4 components.</p><p>[Jun 20, 2023, 4:32 PM] Number of degrees of freedom solved for: 10647 (plus 1521 internal DOFs).</p><p>[Jun 20, 2023, 4:32 PM] Solution time (Study 1): 18 s.</p></div>
      <div class="vs log-vs"><b><svg><use href="#chu"/></svg></b><i></i><u></u><i class="thin"></i><b class="d"><svg><use href="#chu"/></svg></b></div></div>
    </section>
  </div>
</main>

<div class="status">1.25 GB | 1.27 GB</div>

<footer class="taskbar">
  <div class="start"><svg viewBox="0 0 16 16"><path d="m0 2.300 6.500-.9v6.100H0zM7.500 1.200 16 0v7.500H7.500zM0 8.500h6.500v6.100L0 13.700zM7.500 8.500H16V16l-8.500-1.200z" fill="#fff"/></svg></div>
  <div class="search"><svg class="mag" viewBox="0 0 16 16"><circle cx="9.500" cy="6" r="5" fill="none" stroke="#222" stroke-width="1.300"/><path d="m6 9.500-6 6" stroke="#222" stroke-width="1.400"/></svg><span>Type here to search</span>
    <svg class="bfly" viewBox="0 0 72 38"><path d="M27 14c-3 9 5 10 5 24h3c1-8-1-14-7-24z" fill="#6a9c50"/><path d="M20 11c3 6 6 9 9 8s2-6-1-9z" fill="#86ac50"/><path d="m8 8 5-1-3-3 6 1-1-4 6 2 5-2 2 3 3 1-3 3 1 4-5 1-5-1-2 1-2-3z" fill="#a850d0"/><path d="m27 24 2-5 4 1 2-4 4 2 3-1 1 4 3 1-1 4 2 4-4 2-1 3-5 0-5 0-2-4-3-1z" fill="#b44cd8"/><path d="m13 5 5 4 6-5M18 3l1 6M30 22l6 5 6-5M36 19v8M31 30l5-3 5 4" stroke="#dc94f0" fill="none"/><path d="M4 10c4 3 7 8 6 14l12-6c-1 6-7 9-12 12-1 4-4 7-8 5-1-3 1-6 3-8-4-5-4-11-1-17z" fill="#e08a2c" stroke="#3a2010"/><path d="m4 14 6 10-6 8M9 26l9-6M10 25l1 5M3 21l6 3" stroke="#3a2010" fill="none"/><path d="M43 26c2-10 7-17 13-24 2 5 1 9-1 13 5-6 9-8 14-7 0 6-2 11-7 15 1 6-2 11-6 13-5-1-7-5-8-9-3 0-4-1-5-1z" fill="#e8902c" stroke="#2c1a10" stroke-width="1.800"/><path d="M44 26 55 7M45 26l20-14M46 26l15-3M48 26l8 9M50 18l8 4M53 12l7 5M51 28l9-2" stroke="#2c1a10" fill="none"/></svg>
  </div>
  <div class="app tv"><svg viewBox="0 0 18 18"><path d="M1.500 1v3h10V1M1.500 17v-3h10v3M1.500 6.500h10v5h-10zM15 1v5M15 12v5" fill="none" stroke="#e8eef0" stroke-width="1.300"/><path d="M13.800 7.500h2.500v3h-2.500z" fill="#fff"/></svg></div>
  <div class="app run"><svg viewBox="0 0 24 22"><path d="M1 1h8l2 3h12v16H1z" fill="#e0a020"/><path d="M1 5h22v15H1z" fill="#fcd460"/><path d="M5 20v-8h14v8h-4v-4H9v4z" fill="#3a90d8"/></svg></div>
  <div class="app run"><svg viewBox="0 0 24 22"><path d="M1 2h15v13H1z" fill="#8a9a98"/><path d="m5 2 17-1 1 14-15 1z" fill="#c8d0d0"/><path d="m7 4 14-1v10H8z" fill="#f4f8fa"/><path d="m8 11 3-1 2-5 1 6 2-3 1 3 4-4" fill="none" stroke="#2080c0"/><path d="M11 16h6l3 4-6 2-5-2z" fill="#b8bcbc"/></svg></div>
  <div class="app run"><svg viewBox="0 0 24 24"><path d="M12 0c7 0 11 4 11 11s-4 11-10 12C5 24 1 18 1 12S5 0 12 0z" fill="#8008d8"/><circle cx="8" cy="12" r="3.200" fill="#8008d8" stroke="#fff" stroke-width="2.600"/><circle cx="16" cy="12" r="3.200" fill="#8008d8" stroke="#fff" stroke-width="2.600"/><circle cx="19" cy="19" r="5" fill="#f05038"/><path d="m15 16 2-2 3 2 3-1 1 5-5 4z" fill="#ffb020"/><circle cx="18.500" cy="19" r="2" fill="#a040d0"/></svg></div>
  <div class="app run active"><svg><use href="#logo"/></svg></div>
  <div class="tray">
    <svg viewBox="0 0 92 18"><path d="m0 12 6-6 6 6" fill="none" stroke="#fff" stroke-width="1.300"/><path d="M26 5h6q2 0 2 2v5q0 2-2 2h-4q-2 0-2-2zM34 8l3-2v7l-3-2M27 2q3-2 6 0M27 17q3 1 6 0" fill="none" stroke="#fff" stroke-width="1.200"/><circle cx="30" cy="9.500" r="1.500" fill="#fff"/><path d="M50 3h12v9H50zM53 15h7M56.500 12v3M47 6h5v5h-5zM49.500 11v4" fill="none" stroke="#fff" stroke-width="1.200"/><path d="M72 7h3l4-4v12l-4-4h-3z" fill="none" stroke="#fff" stroke-width="1.200"/><path d="M81 6.500q1.500 2.500 0 5M83.500 4.500q3 4.500 0 9M86 2.500q4.500 6.500 0 13" fill="none" stroke="#fff"/></svg>
    <div class="clock">16:33<br>20-06-2023</div>
    <svg class="note" viewBox="0 0 18 18"><path d="M1 1.500h16v12h-5l-3 3.500v-3.500H1z" fill="none" stroke="#fff" stroke-width="1.300"/></svg>
  </div>
</footer>
<script src="plot.js"></script>
</body>
</html>
```
FILE: styles.css
```css
* { box-sizing: border-box; margin: 0; padding: 0; }
body { width: 1600px; height: 900px; overflow: hidden; display: flex; flex-direction: column; background: #18181a; color: #f0f0f0; font: 12px/18px "Open Sans", "Noto Sans", sans-serif; letter-spacing: -.3px; white-space: nowrap; }
ul { list-style: none; }
svg { width: 16px; height: 16px; flex: none; display: block; fill: currentColor; }
.sprite { position: absolute; width: 0; height: 0; }
.flip { transform: scaleX(-1); }
svg.dn { width: 8px; height: 5px; fill: #fff; }
svg.pin { width: 8px; height: 10px; fill: #3a8ecd; }

.titlebar { height: 19px; flex: none; background: #fff; color: #000; display: flex; align-items: center; padding: 0 0 2px 3px; }
.tb-logo { width: 12px; height: 12px; }
.tb-sep { width: 1px; height: 12px; margin: 1px 3px 0 11px; background: #999; }
.tb-sep.second { margin: 0 0 0 20px; }
.quick { display: flex; gap: 8px; padding: 2px 0 0 4px; }
.doc-title { width: 331px; margin-left: 424px; font-size: 12px; letter-spacing: -.26px; }
.win { width: 110px; height: 16px; margin-left: 341px; }
.menubar { height: 27px; flex: none; display: grid; grid-template-columns: 55px 51px 75px 70px 66px 57px 47px 48px 55px 72px 101px 1fr; padding: 4px 6px 0 4px; line-height: 23px; }
.menubar span { padding-left: 10px; }
.menubar .file { background: #348bcb; text-align: center; padding: 0; height: 22px; }
.menubar .current { background: #252527; color: #3a8ecd; text-align: center; padding: 0; }
.help { justify-self: end; width: 16px; height: 16px; margin-top: 2px; line-height: 16px; text-align: center; background: #348bcb; border-radius: 2px; font-weight: 400; font-size: 14px; }

.ribbon { height: 91px; flex: none; margin: 0 3px 4px; background: #252527; border: solid #5a5a5c; border-width: 0 1px 1px; display: flex; }
.group { display: flex; flex-direction: column; position: relative; }
.group::after { content: ""; position: absolute; right: 0; top: 8px; bottom: 7px; width: 1px; background: #58585a; }
.group p { text-align: center; color: #aaa; line-height: 18px; letter-spacing: -.1px; }
.tools { height: 72px; display: flex; padding-top: 3px; }
.tools ul { flex: none; }
.tools li { height: 20px; margin-bottom: 2px; display: flex; align-items: center; line-height: 21px; gap: 2px; }
.tools li svg { width: 16px; }
.off { color: #989898; }
.off svg { opacity: .6; }
.mat-pink { fill: #b455a4; }
.big { text-align: center; line-height: 13px; }
.big > svg, .swatch { display: block; margin: 0 auto; }
.big span { display: block; }
.big .dn { display: inline-block; width: 6px; height: 4px; vertical-align: 1px; }
.swatch { width: 24px; height: 25px; background: #b455a4; margin: 8px auto 5px; }
.g1 { width: 101px; } .g1 .big { width: 44px; } .g1 .big:first-child { margin-left: 6px; }
.big .i-plot { width: 24px; height: 19px; margin: 9px auto 8px; }
.big .i-plotin { width: 32px; height: 26px; margin: 8px auto 4px; }
.g2 { width: 414px; padding-left: 10px; }
.g2 p { margin-left: -20px; } .g3 p { margin-left: -20px; } .g4 p { margin-left: -14px; }
.g2 ul:nth-child(1) { width: 130px; } .g2 ul:nth-child(2) { width: 82px; } .g2 ul:nth-child(3) { width: 85px; } .g2 ul:nth-child(4) { width: 54px; }
.g2 .big { width: 48px; } .g2 .tools { width: 404px; }
.g3 { width: 337px; padding-left: 10px; } .g3 ul:nth-child(1) { width: 121px; } .g3 ul:nth-child(2) { width: 132px; } .g3 .big { width: 67px; }
.g3 li { letter-spacing: -.36px; }
.g4 { width: 174px; padding-left: 7px; }
.g4 li { padding-left: 3px; }
.pressed { width: 70px; border: 1px solid #888; background: #3a3a3c; margin-top: 1px; }
.g4 li.pressed { padding-left: 2px; height: 19px; line-height: 17px; }
.g5 { width: 121px; } .g5 .big:first-child { width: 58px; } .g5 .big + .big { width: 50px; display: flex; flex-direction: column; align-items: center; }
.big .i-imgs { width: 30px; height: 25px; margin: 6px auto 5px; }
.big .i-film { width: 30px; height: 20px; margin: 9px auto 8px; }

main { height: 688px; flex: none; display: flex; padding-left: 3px; }
.panel { border: 1px solid #5a5a5c; overflow: hidden; }
.builder { width: 348px; margin-right: 5px; padding-left: 5px; }
.head { height: 34px; display: flex; align-items: center; padding: 1px 3px 0 2px; gap: 6px; }
h1 { font-size: 21px; line-height: 30px; font-weight: 400; flex: 1; letter-spacing: -.6px; }
.builder h1, .head svg.dn { color: #3a8ecd; fill: #3a8ecd; }
.head.dim svg { fill: #606062; }
.bar { height: 21px; display: flex; align-items: center; color: #888; padding: 0 0 5px 2px; }
.bar svg { margin-right: 7px; }
.bar .up { transform: rotate(90deg); } .bar .down { transform: rotate(-90deg); margin-left: -1px; margin-right: 8px; }
.bar .blue { color: #3a8ecd; }
.bar svg:nth-child(6) { margin-left: -1px; margin-right: 7px; }
.bar svg.dn { margin-right: 11px; }
.bar svg:nth-child(8), .bar svg:nth-child(10) { margin-right: 6px; }
.tree-box { width: 338px; height: 624px; margin-left: -1px; border: 1px solid #5a5a5c; display: grid; grid-template: 605px 17px / 319px 17px; }
.tree { overflow: hidden; }
.tree li { height: 18px; display: flex; align-items: center; line-height: 18px; padding-left: 25px; letter-spacing: -.31px; }
.tree .l2 { padding-left: 45px; } .tree .l3 { padding-left: 65px; }
.tree li > svg, .digits { margin-right: 6px; }
.tree s, .tree svg.t { width: 8px; height: 8px; margin: 0 7px 0 0; flex: none; }
.tree svg.t.c { height: 10px; }
.tree em { margin-left: 6px; }
.tree .sel { background: #454545; letter-spacing: -.48px; }
.mat-o { fill: #f09a20; }
.digits { width: 16px; font: 7.500px/7px "DejaVu Sans Mono", monospace; color: #d070c0; letter-spacing: -.4px; }
.vs { width: 17px; background: #6e6e6e; display: flex; flex-direction: column; }
.vs b, .hs b { width: 17px; height: 17px; flex: none; background: #7e7e7e; display: flex; align-items: center; justify-content: center; }
.vs b svg, .hs b svg { width: 8px; height: 5px; }
.vs b.d svg { transform: scaleY(-1); }
.vs i { background: #1e1e20; margin: 0 1px; }
.vs u { flex: 1; }
.tree-vs i { height: 142px; }
.hs { background: #6e6e6e; display: flex; } .hs u { flex: 1; }
.hs i { width: 15px; background: #1e1e20; margin: 1px 0; }
.hs .l svg { transform: rotate(-90deg); } .hs .r svg { transform: rotate(90deg); }
.corner { background: #f0f0f0; }

.settings { width: 444px; margin-right: 5px; display: flex; flex-direction: column; }
.settings .head { flex: none; height: 35px; padding-left: 7px; color: #e4e4e4; }
.settings h1 { letter-spacing: -.5px; }
h2 { font-size: 14px; font-weight: 400; line-height: 20px; padding-left: 6px; color: #d8d8d8; letter-spacing: -.15px; }
.sbar { height: 22px; flex: none; display: flex; align-items: center; padding: 0 0 4px 7px; }
.sbar svg { height: 12px; margin-right: 7px; } .sbar svg.p { height: 13px; margin-right: 4px; }
.sbar span { width: 28px; }
.scroll { flex: 1; display: flex; min-height: 0; }
.form { width: 425px; height: 609px; overflow: hidden; }
.set-vs i { height: 176px; }
.row { display: flex; align-items: center; padding-left: 5px; letter-spacing: -.22px; }
.input { height: 18px; border: 1px solid #666; background: #252527; line-height: 16px; padding-left: 2px; }
.label-row .input { letter-spacing: -.35px; }
.select { height: 21px; border: 1px solid #666; border-radius: 2px; line-height: 19px; padding: 0 6px 0 12px; display: flex; align-items: center; justify-content: space-between; }
.btn { width: 20px; height: 22px; border: 1px solid #666; border-radius: 2px; display: flex; align-items: center; justify-content: center; margin-left: 8px; }
.label-row { height: 22px; margin: 9px 0; } .label-row label { width: 41px; } .label-row .input { width: 346px; }
h3 { height: 26px; line-height: 26px; background: #434345; font-size: 13px; font-weight: 400; display: flex; align-items: center; margin-bottom: 2px; color: #e8e8e8; letter-spacing: -.15px; }
h3 svg.dn { margin: 0 12px 3px 6px; } h3 svg.dk { fill: #606062; } h3 svg.rt { transform: rotate(-90deg); margin-left: 5px; margin-right: 13px; }
.data { height: 94px; padding-top: 5px; }
.data .row { height: 27px; } .data label { width: 119px; } .data .select { width: 296px; } .data .row:first-child .select { width: 268px; }
.coord { padding-top: 4px; height: 102px; }
.coord .row { height: 24px; } .coord .row:first-child { height: 27px; } .coord label { width: 171px; } .coord .select { width: 244px; }
.coord .input { width: 223px; margin-right: 10px; padding-left: 2px; }
.fs { width: 419px; height: 122px; margin: 12px 0 14px 3px; border: 1px solid #5a5a5c; padding: 0 8px; }
.lg { height: 13px; width: 108px; margin: -8px 0 0 -3px; padding-left: 3px; background: #18181a; display: flex; align-items: center; line-height: 13px; letter-spacing: -.15px; }
.lg i { width: 14px; height: 13px; background: #b0b0b0; border: 1px solid #888; margin-right: 5px; }
.mm { display: flex; height: 18px; margin-top: 7px; color: #747476; letter-spacing: -.05px; }
.mm label { width: 68px; } .mm .input { width: 333px; border-color: #3e3e40; background: transparent; color: #8c8c8e; letter-spacing: -.22px; }
.slider { height: 30px; margin-top: 3px; width: 402px; position: relative; background: repeating-linear-gradient(90deg, #999 0 1px, transparent 1px 33.340px) 0 1px / 100% 3px no-repeat, repeating-linear-gradient(90deg, #999 0 1px, transparent 1px 33.340px) 0 26px / 100% 3px no-repeat, linear-gradient(#444 1px, #606060 1px 3px, #444 3px) 0 13px / 401px 4px no-repeat; }
.slider + .mm { margin-top: 3px; }
.slider i { position: absolute; top: 6px; left: 28px; width: 11px; height: 18px; background: #8c8c8c; border: 1px solid #777; }
.slider.high i { left: 395px; }

.right { width: 792px; display: flex; flex-direction: column; gap: 5px; }
.graphics { height: 546px; } .messages { height: 137px; }
.tabs { height: 29px; padding: 5px 5px 0 4px; display: flex; align-items: flex-start; border-bottom: 1px solid #5a5a5c; line-height: 23px; font-size: 13px; letter-spacing: -.22px; }
.tabs span { height: 23px; background: #545456; padding-left: 4px; margin-right: 8px; display: flex; align-items: center; }
.tabs span svg { width: 9px; height: 9px; margin-left: 8px; margin-bottom: 2px; }
.tabs .open { background: #18181a; border: 1px solid #5a5a5c; border-bottom: 0; height: 24px; width: 61px; padding-top: 1px; }
.tabs .conv { width: 141px; }
.tabs > svg.dn { margin: 11px 6px 0 auto; fill: #606062; } .tabs > svg.pin { fill: #606062; margin-top: 9px; margin-right: -1px; }
.gbar { height: 29px; display: flex; align-items: center; padding-left: 6px; }
.gbar > svg { margin-right: 7px; }
.gbar > svg.dn { margin-right: 11px; }
.gbar > svg:nth-child(3) { margin-right: 6px; }
.gbar i { width: 1px; height: 16px; background: #58585a; margin: 0 8px 0 1px; }
.gbar i + b { margin-left: -3px; }
.gbar svg:nth-child(7) { margin-right: 5px; }
.gbar b, .mbar b { width: 20px; height: 20px; border: 1px solid #888; border-radius: 2px; background: #38383c; display: flex; align-items: center; justify-content: center; margin-right: 3px; }
.gbar b + svg { margin-left: 2px; margin-right: 5px; }
.gbar .dn:nth-child(13) { margin-right: 11px; }
.plot { display: grid; width: 790px; height: 486px; }
#field, #chart { grid-area: 1 / 1; }
#field { margin: 54px 0 0 197px; width: 374px; height: 374px; }
#chart { width: 790px; height: 486px; font: 12px "DejaVu Sans", sans-serif; fill: #d4d4d4; }
.messages .open { width: 90px; } .pr { width: 60px; } .lo { width: 30px; } .ev { width: 107px; }
.messages .tabs span { letter-spacing: -.37px; line-height: 24px; }
.mbar { height: 28px; display: flex; align-items: center; padding: 1px 0 0 7px; }
.mbar b { margin-left: 5px; }
.log { width: 782px; height: 74px; margin-left: 4px; border: 1px solid #5a5a5c; display: flex; }
.lines { flex: 1; overflow: hidden; padding: 0 0 0 2px; margin-top: -3px; } .lines p { line-height: 15px; height: 15px; letter-spacing: -.38px; }
.log-vs { height: 72px; } .log-vs i { height: 22px; } .log-vs i.thin { height: 3px; }
.status { height: 31px; flex: none; padding: 11px 0 0 921px; letter-spacing: -.7px; }

.taskbar { height: 40px; flex: none; background: #21373f; display: flex; }
.start { width: 48px; display: flex; align-items: center; justify-content: center; }
.search { width: 288px; background: #f2f2f2; border: 1px solid #bbb; color: #333; display: flex; align-items: center; font-size: 15px; letter-spacing: -.5px; }
.mag { margin: 0 11px 0 12px; } .search span { width: 173px; }
.bfly { width: 71px; height: 38px; }
.app { width: 49px; display: flex; align-items: center; justify-content: center; border-bottom: 2px solid transparent; }
.app svg { width: 24px; height: 22px; }
.app.tv { width: 48px; padding-right: 16px; margin-right: 7px; } .app.tv svg { width: 17px; height: 17px; }
.tv { padding-left: 16px; }
.run { width: 40px; border-color: #76b9ed; margin-right: 9px; }
.run.active { width: 48px; background: #4b6067; margin: 0 0 0 -4px; }
.tray { margin-left: auto; display: flex; align-items: center; font-size: 12px; line-height: 18px; text-align: center; padding-right: 24px; letter-spacing: -.35px; }
.tray svg { width: 92px; height: 18px; } .clock { width: 66px; margin: 0 13px 0 0; }
.tray .note { width: 18px; height: 18px; }
```
FILE: plot.js
```js
// Rainbow colour table shared by the surface and the legend.
const STOPS = [[0, 26, 26, 130], [.1, 36, 36, 185], [.22, 48, 70, 250], [.33, 50, 150, 255], [.44, 55, 235, 240], [.53, 110, 255, 150], [.62, 200, 250, 50], [.7, 232, 212, 10], [.8, 238, 120, 0], [.9, 225, 20, 0], [1, 115, 0, 0]];
function colour(v) {
  v = Math.max(0, Math.min(1, v));
  let i = 1;
  while (i < STOPS.length - 1 && v > STOPS[i][0]) i++;
  const a = STOPS[i - 1], b = STOPS[i], t = (v - a[0]) / (b[0] - a[0]);
  return [1, 2, 3].map(n => Math.round(a[n] + (b[n] - a[n]) * t));
}

// Fringe maxima of each lattice row: row, x from the left edge, half width, peak.
const PEAKS = [
  [0,125,46,.55],[1,52,22,.4],[2,98,28,.45],[3,38,15,.6],[3,174,34,.35],[4,78,26,.4],[5,27,14,.6],[5,147,36,.35],[6,60,22,.35],[7,17,15,.6],[7,103,32,.35],
  [8,186,50,.65],[8,52,20,.3],[9,6,12,.75],[9,85,24,.45],[10,157,40,.6],[10,30,16,.25],[11,2,12,.65],[11,70,20,.45],[12,125,32,.65],[13,0,9,.6],[13,60,17,.6],
  [14,113,32,.5],[15,52,17,.55],[16,90,26,.35],[17,38,14,.6],[17,177,34,.25],[18,84,26,.25],[19,35,14,.65],[19,164,50,.25],[21,35,14,.5],[21,130,50,.22],
  [23,28,14,.42],[25,26,14,.42],[27,22,14,.38],[29,20,16,.35],[31,20,16,.35],[33,20,16,.3],[35,20,18,.32],[37,24,20,.3],[39,50,34,.25],[41,60,26,.32],[41,20,14,.25],
  [43,68,18,.4],[45,73,17,.5],[46,34,10,.4],[47,83,22,.6],[47,8,12,.3],[48,38,10,.35],[49,92,22,.55],[49,8,12,.3],[50,46,14,.4],[51,104,22,.6],[51,8,10,.3],[52,2,10,.45],[52,55,14,.4],
  [53,131,28,.68],[53,25,16,.25],[54,2,10,.55],[54,65,16,.4],[55,135,26,.4],[55,184,36,.5],[56,5,12,.6],[56,82,20,.35],[57,182,42,.68],[57,45,16,.3],[58,9,14,.75],[58,88,20,.42],
  [59,184,36,.32],[60,24,14,.7],[60,110,24,.38],[61,64,16,.32],[62,34,13,.7],[62,145,30,.35],[63,88,20,.25],[64,47,15,.7],[64,168,36,.3],[65,104,24,.25],[66,62,15,.65],[66,2,9,.5]
];
const N = 374, MID = 186.5, PITCH = 7.75, STEP = 5.6;
const strength = (k, x) => {
  const d = MID - Math.abs(x - MID);
  const y = (k - 33) / 33;
  let v = .2 + .1 * Math.exp(-((x - MID) ** 2) / 9000 - y * y * 8) + (1 - y * y) * .05 * Math.sin(d / 14 + k * 1.6);
  v += .04 * Math.sin(d * .08 + k * .9);
  for (const p of PEAKS) if (p[0] === k) v += p[3] * Math.exp(-(((d - p[1]) / p[2]) ** 2));
  return v;
};
const ctx = document.getElementById('field').getContext('2d');
const img = ctx.createImageData(N, N);
const val = new Float32Array(N * N).fill(.02);
for (let k = 0; k <= 66; k++) {
  const cy = Math.round(1.4 + STEP * k);
  // Spots are flat near the top and bottom edges and taller around the middle.
  const mid = Math.max(0, 1 - Math.abs(k - 33) / 18);
  for (let n = -1; n < 50; n++) {
    const cx = (k % 2 ? -1.6 : 2.3) + PITCH * n, s = strength(k, cx);
    for (let y = cy - 3; y <= cy + 3; y++) for (let x = Math.floor(cx - 4); x <= cx + 4; x++) {
      if (x < 0 || y < 0 || x >= N || y >= N) continue;
      const dx = x - cx + (y - cy) * .5, dy = y - cy;
      val[y * N + x] += s * 1.12 * Math.exp(-dx * dx / (3.2 - mid) - dy * dy / (1.3 + mid * 1.8));
    }
  }
}
for (let i = 0; i < N * N; i++) {
  const c = colour(val[i]);
  img.data.set([c[0], c[1], c[2], 255], i * 4);
}
ctx.putImageData(img, 0, 0);

// Axes, labels and colour legend.
let s = '<defs><linearGradient id="rainbow" x1="0" y1="1" x2="0" y2="0">' + STOPS.map(p => `<stop offset="${p[0]}" stop-color="rgb(${p[1]},${p[2]},${p[3]})"/>`).join('') + '</linearGradient></defs>';
s += '<path d="M875 235H1504V646H875Z" fill="none" stroke="#8a8a8a" stroke-width="2"/>';
let ticks = '';
for (let i = 0; i <= 10; i++) {
  const x = Math.round(907 + 56.6 * i);
  ticks += `M${x} 236v5M${x} 645v-5`;
  if (i < 10) s += `<text x="${x}" y="664" text-anchor="middle">${+((i - 5) / 5).toFixed(1)}</text>`;
}
for (let i = -7; i <= 7; i++) {
  const y = Math.round(440 - 28.3 * i);
  ticks += `M876 ${y}h5M1503 ${y}h-5`;
  if (i < 7) s += `<text x="870" y="${y + 4}" text-anchor="end">${i}</text>`;
}
s += `<path d="${ticks}" stroke="#8a8a8a" stroke-width="2"/>`;
s += '<rect x="1525" y="267" width="15" height="373" fill="url(#rainbow)" stroke="#666"/>';
[.2, .4, .6, .8, 1, 1.2].forEach((v, i) => {
  const y = 589.6 - 55.4 * i;
  s += `<path d="M1525 ${y}h3M1537 ${y}h3" stroke="#777"/><text x="1548" y="${y + 4}">${v}</text>`;
});
const power = (x, y, n) => `<text x="${x}" y="${y}">×10<tspan dy="-5" font-size="9">${n}</tspan></text>`;
s += power(828, 247, 5) + power(1541, 258, 4) + power(1472, 664, 6);
s += '<text x="823" y="224">Time=1.3943E-8 s</text><text x="1187" y="225" text-anchor="middle">Incident intensity</text><text x="1189" y="680" text-anchor="middle">x (m)</text><text transform="translate(819 440) rotate(-90)" text-anchor="middle">y (m)</text>';
s += '<use href="#logo" x="1569" y="203" width="24" height="22"/>';
document.getElementById('chart').innerHTML = s;
```
